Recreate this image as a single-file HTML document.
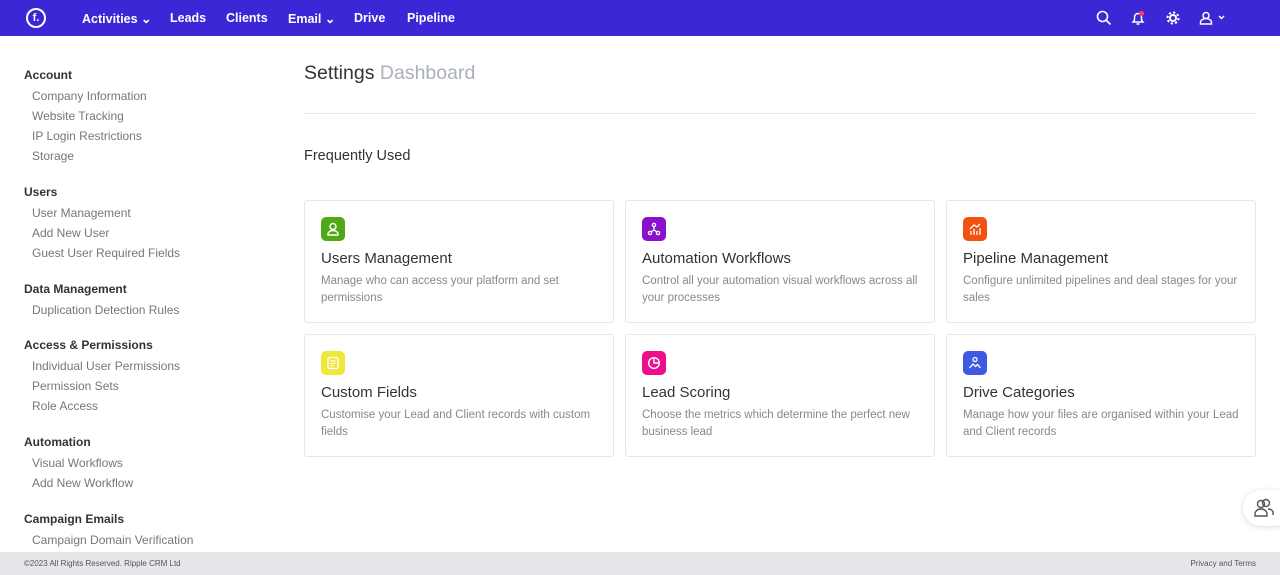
<!DOCTYPE html>
<html><head><meta charset="utf-8"><style>
*{box-sizing:border-box;margin:0;padding:0}
body{width:1280px;height:575px;overflow:hidden;background:#fff;font-family:"Liberation Sans",sans-serif;position:relative;color:#333}
.nav{position:absolute;left:0;top:0;width:1280px;height:36px;background:#3b27d6;color:#fff}
.nav .logo{position:absolute;left:26px;top:8px;width:20px;height:20px;border:2px solid #fff;border-radius:50%;font-size:11px;font-weight:bold;text-align:center;line-height:16px}
.nav .m{position:absolute;top:11px;font-size:12.5px;font-weight:bold}
.side{position:absolute;left:0;top:42px;width:290px;height:516px;overflow:hidden}
.h{position:absolute;left:24px;font-size:12px;font-weight:bold;color:#333}
.i{position:absolute;left:32px;font-size:12px;color:#777}
.title{position:absolute;left:304px;top:62px;font-size:19.5px;color:#333}
.title span{color:#aab0ba}
.hr{position:absolute;left:304px;top:113px;width:952px;height:1px;background:#e6e6e6}
.fu{position:absolute;left:304px;top:148px;font-size:14.5px;color:#333}
.card{position:absolute;width:310px;height:123px;border:1px solid #e6e7ea;border-radius:3px}
.ic{position:absolute;left:16px;top:16px;width:24px;height:24px;border-radius:5px}
.ic svg{position:absolute;left:5px;top:5px}
.ct{position:absolute;left:16px;top:49px;font-size:15px;color:#333}
.cd{position:absolute;left:16px;top:72px;width:276px;font-size:11.5px;line-height:16.5px;color:#888}
.foot{position:absolute;left:0;top:552px;width:1280px;height:23px;background:#e6e7eb;font-size:8px;color:#555}
</style></head><body>
<div class="nav">
<div class="logo">f.</div>
<div class="m" style="left:82px">Activities ⌄</div>
<div class="m" style="left:170px">Leads</div>
<div class="m" style="left:226px">Clients</div>
<div class="m" style="left:288px">Email ⌄</div>
<div class="m" style="left:354px">Drive</div>
<div class="m" style="left:407px">Pipeline</div>
<svg style="position:absolute;left:1096px;top:10px" width="16" height="16" fill="none" stroke="#fff" stroke-width="1.6"><circle cx="6.5" cy="6.5" r="5"/><path d="M10 10l4.5 4.5"/></svg>
<svg style="position:absolute;left:1130px;top:10px" width="16" height="16" fill="none" stroke="#fff" stroke-width="1.5"><path d="M3 12h10l-1.5-2V7a3.5 3.5 0 0 0-7 0v3z M6.5 14h3"/><circle cx="11.5" cy="3.5" r="2.5" fill="#f44" stroke="none"/></svg>
<svg style="position:absolute;left:1165px;top:10px" width="16" height="16" fill="none" stroke="#fff" stroke-width="2"><circle cx="8" cy="8" r="3"/><circle cx="8" cy="8" r="5.5" stroke-dasharray="2.2 2.1"/></svg>
<svg style="position:absolute;left:1199px;top:11px" width="28" height="14" fill="none" stroke="#fff" stroke-width="1.5"><circle cx="7" cy="4.5" r="3"/><path d="M1.5 13v-1.5a5.5 4 0 0 1 11 0V13z M20 5l2.5 2.5L25 5"/></svg>
</div>
<div class="side">
<div class="h" style="top:26px">Account</div>
<div class="i" style="top:47px">Company Information</div>
<div class="i" style="top:67px">Website Tracking</div>
<div class="i" style="top:87px">IP Login Restrictions</div>
<div class="i" style="top:107px">Storage</div>
<div class="h" style="top:143px">Users</div>
<div class="i" style="top:164px">User Management</div>
<div class="i" style="top:184px">Add New User</div>
<div class="i" style="top:204px">Guest User Required Fields</div>
<div class="h" style="top:240px">Data Management</div>
<div class="i" style="top:261px">Duplication Detection Rules</div>
<div class="h" style="top:296px">Access &amp; Permissions</div>
<div class="i" style="top:317px">Individual User Permissions</div>
<div class="i" style="top:337px">Permission Sets</div>
<div class="i" style="top:357px">Role Access</div>
<div class="h" style="top:393px">Automation</div>
<div class="i" style="top:414px">Visual Workflows</div>
<div class="i" style="top:434px">Add New Workflow</div>
<div class="h" style="top:470px">Campaign Emails</div>
<div class="i" style="top:491px">Campaign Domain Verification</div>
<div class="i" style="top:511px">Sending Reputation</div>
</div>
<div class="title">Settings <span>Dashboard</span></div>
<div class="hr"></div>
<div class="fu">Frequently Used</div>

<div class="card" style="left:304px;top:200px"><div class="ic" style="background:#4fa816"><svg width="14" height="14" fill="none" stroke="#fff" stroke-width="1.4"><circle cx="7" cy="4.5" r="3"/><path d="M2 13v-1a5 3.5 0 0 1 10 0v1z"/></svg></div><div class="ct">Users Management</div><div class="cd">Manage who can access your platform and set permissions</div></div>
<div class="card" style="left:625px;top:200px"><div class="ic" style="background:#8a12cc"><svg width="14" height="14" fill="none" stroke="#fff" stroke-width="1.3"><circle cx="7" cy="3" r="1.6"/><circle cx="3" cy="11" r="1.6"/><circle cx="11" cy="11" r="1.6"/><path d="M7 4.6v3.4M7 8L4 10M7 8l3 2"/></svg></div><div class="ct">Automation Workflows</div><div class="cd" style="width:285px">Control all your automation visual workflows across all your processes</div></div>
<div class="card" style="left:946px;top:200px"><div class="ic" style="background:#f2520f"><svg width="14" height="14" fill="none" stroke="#fff" stroke-width="1.3"><path d="M3 13V9M6 13V7M9 13V9M12 13V6M2 7l4-4 3 2 3-3"/></svg></div><div class="ct">Pipeline Management</div><div class="cd">Configure unlimited pipelines and deal stages for your sales</div></div>
<div class="card" style="left:304px;top:334px"><div class="ic" style="background:#efe83a"><svg width="14" height="14" fill="none" stroke="#fff" stroke-width="1.3"><rect x="2" y="1.5" width="10" height="11" rx="1.5"/><path d="M4.5 5h5M4.5 7.5h5M4.5 10h3"/></svg></div><div class="ct">Custom Fields</div><div class="cd">Customise your Lead and Client records with custom fields</div></div>
<div class="card" style="left:625px;top:334px"><div class="ic" style="background:#ec0e8c"><svg width="14" height="14" fill="none" stroke="#fff" stroke-width="1.4"><circle cx="7" cy="7" r="5.3"/><path d="M7 1.7V7h5.3"/></svg></div><div class="ct">Lead Scoring</div><div class="cd">Choose the metrics which determine the perfect new business lead</div></div>
<div class="card" style="left:946px;top:334px"><div class="ic" style="background:#3f5ae0"><svg width="14" height="14" fill="none" stroke="#fff" stroke-width="1.3"><circle cx="7" cy="3.5" r="2"/><path d="M1.5 12l3.5-4 2.5 2.5 2-2 3 3.5"/></svg></div><div class="ct">Drive Categories</div><div class="cd">Manage how your files are organised within your Lead and Client records</div></div>

<div style="position:absolute;left:1243px;top:490px;width:50px;height:36px;border-radius:18px;background:#fff;box-shadow:0 1px 6px rgba(0,0,0,.15)"><svg style="position:absolute;left:10px;top:8px" width="22" height="20" fill="none" stroke="#555" stroke-width="1.4"><circle cx="8" cy="6" r="3.5"/><circle cx="13" cy="5" r="3.5"/><path d="M2 18v-2a6 5 0 0 1 12 0v2zM15 11a5 4 0 0 1 5 5v1"/></svg></div>
<div class="foot"><span style="position:absolute;left:24px;top:7px">©2023 All Rights Reserved. Ripple CRM Ltd</span><span style="position:absolute;right:24px;top:7px">Privacy and Terms</span></div>
</body></html>
